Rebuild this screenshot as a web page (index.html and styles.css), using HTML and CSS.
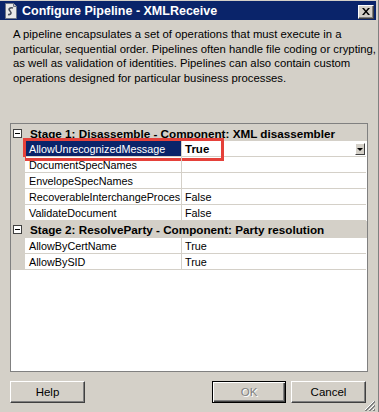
FILE: index.html
```html
<!DOCTYPE html>
<html lang="en">

<head>
  <meta charset="utf-8">
  <title>Configure Pipeline - XMLReceive</title>
  <link rel="stylesheet" href="styles.css">
</head>

<body>
  <div class="window">
    <div class="titlebar">
      <svg class="app-icon" width="12" height="16" viewBox="0 0 12 16">
        <path d="M0.5 0.5 H8.5 L11.5 3.5 V15.5 H0.5 Z" fill="#e8e8e8" stroke="#6d7587"/>
        <path d="M8.5 0.5 V3.5 H11.5" fill="#c8c8c8" stroke="#6d7587"/>
        <path d="M8 5 C5 4 3 6 5 8 C7 10 6 12 3 11.5" fill="none" stroke="#4a4f5c" stroke-width="1.6"/>
      </svg>
      <span class="title">Configure Pipeline - XMLReceive</span>
      <span class="close-btn">
        <svg width="8" height="7" viewBox="0 0 8 7">
          <path d="M0 0 L2 0 L4 2.5 L6 0 L8 0 L5 3.5 L8 7 L6 7 L4 4.5 L2 7 L0 7 L3 3.5 Z" fill="#000"/>
        </svg>
      </span>
    </div>

    <p class="intro">A pipeline encapsulates a set of operations that must execute in a<br>particular, sequential order. Pipelines often handle file coding or crypting,<br>as well as validation of identities. Pipelines can also contain custom<br>operations designed for particular business processes.</p>

    <div class="grid">
      <div class="rows">
        <div class="cat"><span class="toggle"></span>Stage 1: Disassemble - Component: XML disassembler</div>
        <div class="prop selected">
          <span class="gutter"></span>
          <span class="name">AllowUnrecognizedMessage</span>
          <span class="value"><b>True</b><span class="dropdown"></span></span>
          <span class="highlight"></span>
        </div>
        <div class="prop">
          <span class="gutter"></span>
          <span class="name">DocumentSpecNames</span>
          <span class="value"></span>
        </div>
        <div class="prop">
          <span class="gutter"></span>
          <span class="name">EnvelopeSpecNames</span>
          <span class="value"></span>
        </div>
        <div class="prop">
          <span class="gutter"></span>
          <span class="name">RecoverableInterchangeProces</span>
          <span class="value">False</span>
        </div>
        <div class="prop">
          <span class="gutter"></span>
          <span class="name">ValidateDocument</span>
          <span class="value">False</span>
        </div>
        <div class="cat"><span class="toggle"></span>Stage 2: ResolveParty - Component: Party resolution</div>
        <div class="prop">
          <span class="gutter"></span>
          <span class="name">AllowByCertName</span>
          <span class="value">True</span>
        </div>
        <div class="prop">
          <span class="gutter"></span>
          <span class="name">AllowBySID</span>
          <span class="value">True</span>
        </div>
      </div>
    </div>

    <div class="buttons">
      <button type="button" class="btn">Help</button>
      <span class="spacer"></span>
      <button type="button" class="btn default" disabled>OK</button>
      <button type="button" class="btn">Cancel</button>
    </div>

    <svg class="grip" width="11" height="11" viewBox="0 0 11 11">
      <path d="M10 1 L1 10 M10 5 L5 10 M10 9 L9 10" stroke="#fff" stroke-width="1"/>
      <path d="M11 1 L1 11 M11 2 L2 11 M11 5 L5 11 M11 6 L6 11 M11 9 L9 11 M11 10 L10 11" stroke="#808080" stroke-width="1"/>
    </svg>
  </div>
</body>

</html>
```

FILE: styles.css
```css
body {
  margin: 0;
  background: #d4d0c8;
  font-family: 'Liberation Sans', Arial, sans-serif;
  font-size: 11px;
  color: #000;
}

.window {
  position: relative;
  width: 379px;
  height: 412px;
  box-sizing: border-box;
  padding-right: 2px;
  border-right: 1px solid #808080;
  overflow: hidden;
}

/* title bar */
.titlebar {
  display: flex;
  align-items: center;
  height: 19px;
  margin-top: 1px;
  background: #0a246a;
  color: #fff;
}

.app-icon {
  margin-left: 5px;
  margin-right: 5px;
}

.title {
  font-weight: bold;
  font-size: 12.5px;
}

.close-btn {
  display: flex;
  align-items: center;
  justify-content: center;
  width: 16px;
  height: 14px;
  box-sizing: border-box;
  margin-left: auto;
  margin-right: 2px;
  margin-top: 2px;
  background: #d4d0c8;
  border: 1px solid;
  border-color: #fff #404040 #404040 #fff;
  box-shadow: inset -1px -1px #808080;
}

.intro {
  height: 96px;
  margin: 0;
  padding: 7px 0 0 13px;
  font-size: 11.3px;
  line-height: 14.7px;
  white-space: nowrap;
}

/* property grid */
.grid {
  height: 249px;
  margin-left: 10px;
  width: 358px;
  box-sizing: border-box;
  border: 1px solid #808080;
  background: #fff;
}

.rows {
  border-top: 1px solid #d4d0c8;
}

.cat {
  display: flex;
  align-items: center;
  height: 17px;
  padding-left: 2px;
  background: #d4d0c8;
  font-weight: bold;
  font-size: 11.7px;
  white-space: nowrap;
}

.rows > .cat:first-child {
  height: 16px;
}

.toggle {
  position: relative;
  width: 9px;
  height: 9px;
  box-sizing: border-box;
  margin-right: 8px;
  border: 1px solid #404040;
  background: #fff;
}

.toggle::after {
  content: "";
  position: absolute;
  left: 1px;
  top: 3px;
  width: 5px;
  height: 1px;
  background: #000;
}

.prop {
  position: relative;
  display: grid;
  grid-template-columns: 14px 156px 185px;
  height: 16px;
  font-size: 10.8px;
}

.gutter {
  background: #d4d0c8;
}

.name,
.value {
  display: flex;
  align-items: center;
  height: 16px;
  box-sizing: border-box;
  border-bottom: 1px solid #d4d0c8;
  white-space: nowrap;
  overflow: hidden;
}

.name {
  padding-left: 4px;
  border-right: 1px solid #d4d0c8;
  width: 157px;
}

.value {
  padding-left: 3px;
  margin-left: 1px;
}

.selected .name {
  background: #0a246a;
  color: #fff;
}

.selected .value b {
  font-size: 11.5px;
}

.dropdown {
  position: relative;
  width: 10px;
  height: 12px;
  box-sizing: border-box;
  margin-left: auto;
  margin-right: 1px;
  background: #d4d0c8;
  border: 1px solid;
  border-color: #fff #404040 #404040 #fff;
}

.dropdown::after {
  content: "";
  position: absolute;
  left: 1px;
  top: 4px;
  border-left: 3px solid transparent;
  border-right: 3px solid transparent;
  border-top: 3px solid #000;
}

.highlight {
  position: absolute;
  left: 12px;
  top: -3px;
  width: 201px;
  height: 23px;
  box-sizing: border-box;
  border: 3px solid #e5413a;
}

/* buttons */
.buttons {
  display: flex;
  margin-top: 9px;
  padding: 0 10px;
}

.spacer {
  flex: 1;
}

.btn {
  width: 75px;
  height: 22px;
  margin: 0;
  padding: 0;
  background: #d4d0c8;
  border: 1px solid;
  border-color: #fff #404040 #404040 #fff;
  box-shadow: inset -1px -1px #808080;
  font-family: 'Liberation Sans', Arial, sans-serif;
  font-size: 11.5px;
  color: #000;
}

.btn.default {
  width: 74px;
  margin-right: 5px;
  border: 1px solid #000;
  box-shadow: inset 1px 1px #fff, inset -1px -1px #404040, inset -2px -2px #808080;
  color: #808080;
  text-shadow: 1px 1px #fff;
}

.grip {
  position: absolute;
  right: 3px;
  bottom: 1px;
}
```
